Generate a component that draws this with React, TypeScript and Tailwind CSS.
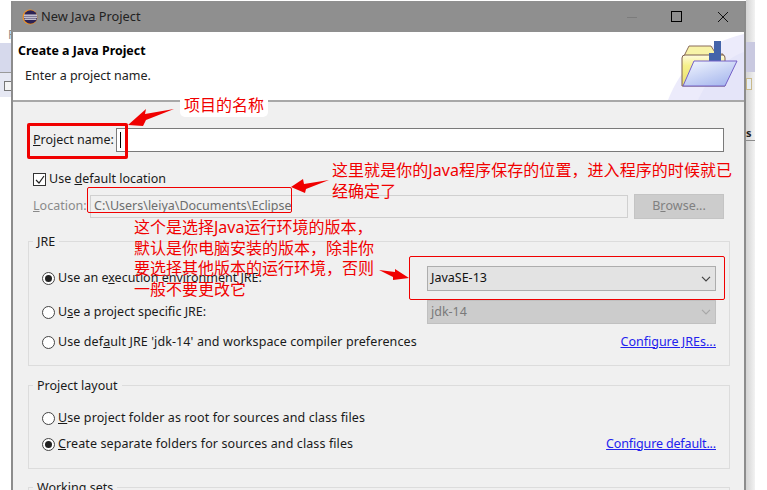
const font = "[font-family:'Noto_Sans','Noto_Sans_CJK_SC',sans-serif]";

function EclipseIcon() {
  return (
    <svg width="16" height="16" viewBox="0 0 16 16">
      <circle cx="8" cy="8" r="7.5" fill="#f7941e" />
      <circle cx="8.5" cy="8" r="6.8" fill="#2c2255" />
      <rect x="2" y="5.6" width="13" height="1.1" fill="#fff" />
      <rect x="1.8" y="7.6" width="13.4" height="1.1" fill="#fff" />
      <rect x="2.4" y="9.6" width="12" height="1.1" fill="#fff" />
    </svg>
  );
}

function FolderBanner() {
  return (
    <svg width="76" height="66" viewBox="0 0 76 66">
      <defs>
        <linearGradient id="flap" x1="0" y1="0" x2="0.7" y2="1">
          <stop offset="0" stopColor="#f4f8ff" />
          <stop offset="1" stopColor="#a9b9ee" />
        </linearGradient>
        <linearGradient id="back" x1="0" y1="0" x2="0" y2="1">
          <stop offset="0" stopColor="#fffbe0" />
          <stop offset="0.35" stopColor="#f6f08a" />
          <stop offset="1" stopColor="#e8e070" />
        </linearGradient>
      </defs>
      <path d="M0 66C14 30 40 8 76 0V66Z" fill="#ecebfb" />
      <path d="M30 66C42 40 58 24 76 18V66Z" fill="#e5e5f9" />
      <g transform="translate(3 -4)">
        <path d="M12 28L18 16H40L45 24H52V28Z" fill="#f8f3a8" stroke="#8a6d5a" />
        <path d="M11 28Q11 25 14 25H52Q54 25 54 28V56H11Z" fill="url(#back)" stroke="#7d5f50" />
        <path d="M43 11H50V32H38V23H43Z" fill="#4464aa" />
        <path d="M23 31H66L54 56H12Z" fill="url(#flap)" stroke="#7560c8" />
      </g>
    </svg>
  );
}

function Radio({ checked }: { checked?: boolean }) {
  return (
    <span className="flex h-[13px] w-[13px] shrink-0 items-center justify-center rounded-full border border-[#444] bg-white">
      {checked && <span className="h-[7px] w-[7px] rounded-full bg-[#222]" />}
    </span>
  );
}

function Chevron({ color }: { color: string }) {
  return (
    <svg width="10" height="6" viewBox="0 0 10 6" fill="none" stroke={color} strokeWidth="1.2">
      <path d="M1 .8l4 4 4-4" />
    </svg>
  );
}

function Select({ label, disabled }: { label: string; disabled?: boolean }) {
  return (
    <div
      className={
        disabled
          ? "flex h-[24px] w-[289px] items-center justify-between border border-[#c0c0c0] bg-[#cccccc] pl-[3px] pr-[4px] text-[#7a7a7a]"
          : "flex h-[25px] w-[289px] items-center justify-between border border-[#adadad] bg-[#e3e3e3] pl-[3px] pr-[4px] text-[#111]"
      }
    >
      <span>{label}</span>
      <Chevron color={disabled ? "#a8a8a8" : "#444"} />
    </div>
  );
}

function GroupLabel({ text }: { text: string }) {
  return <span className="absolute left-[4px] top-[-9px] bg-[#f0f0f0] px-[4px] leading-[18px] text-[#1a1a1a]">{text}</span>;
}

function RadioRow({ checked, children, link }: { checked?: boolean; children: React.ReactNode; link?: React.ReactNode }) {
  return (
    <div className="flex h-[18px] items-center gap-[3px] pl-[13px] pr-[13px]">
      <Radio checked={checked} />
      <span className="flex-1 tracking-[0.1px] text-[#1a1a1a]">{children}</span>
      {link}
    </div>
  );
}

function Annotation({ className, children }: { className: string; children: React.ReactNode }) {
  return <div className={`absolute whitespace-nowrap text-[16px] leading-[20.5px] text-[#f00000] ${className}`}>{children}</div>;
}

export default function App() {
  return (
    <div className={`relative flex h-[490px] w-[767px] overflow-hidden bg-white text-[12.5px] ${font}`}>
      {/* what is left of the main window behind the dialog */}
      <div className="w-[11px] shrink-0 overflow-hidden pt-[26px]">
        <div className="h-[17px] pl-[8px] leading-[17px] text-[#8a8a8a]">P</div>
        <div className="h-[29px] bg-[#d6d9ec]" />
        <div className="h-[25px] border-t border-[#9a9a9a] bg-[#e6e8f3] pl-[4px] pt-[8px]">
          <div className="h-[10px] border border-r-0 border-[#777] bg-[#f4f4f4]" />
        </div>
      </div>

      <div className="flex h-[489px] w-[735px] shrink-0 flex-col self-end border-x-2 border-[#8c8c8c] bg-[#f0f0f0]">
        <div className="flex h-[31px] shrink-0 items-center bg-[#8f8f8f] pl-[9px] text-[#222]">
          <EclipseIcon />
          <span className="ml-[3px] flex-1 pt-[1px] text-[12.8px]">New Java Project</span>
          <svg width="12" height="12" viewBox="0 0 12 12" className="mr-[33px]" fill="none">
            <path d="M1 6.5h10" stroke="#7c7c7c" />
          </svg>
          <svg width="12" height="12" viewBox="0 0 12 12" className="mr-[34px]" fill="none">
            <rect x=".5" y=".5" width="10" height="10" stroke="#000" />
          </svg>
          <svg width="12" height="12" viewBox="0 0 12 12" className="mr-[15px]" fill="none">
            <path d="M1 1l10 10M11 1L1 11" stroke="#111" />
          </svg>
        </div>

        <div className="flex h-[70px] shrink-0 justify-between border-b-2 border-[#a8a8a8] bg-white">
          <div className="pl-[5px] pt-[10px]">
            <div className="text-[12.4px] font-bold leading-[18px] text-black">Create a Java Project</div>
            <div className="mt-[7px] pl-[7px] leading-[18px] text-[#222]">Enter a project name.</div>
          </div>
          <div className="self-end">
            <FolderBanner />
          </div>
        </div>

        <div className="flex flex-col pl-[20px] pr-[20px] pt-[26px]">
          <div className="flex h-[24px] items-center">
            <span className="w-[83px] text-[#1a1a1a]">
              <span className="underline">P</span>roject name:
            </span>
            <div className="flex h-[24px] flex-1 items-center border border-[#7a7a7a] bg-white pl-[3px]">
              <span className="h-[16px] w-px bg-black" />
            </div>
          </div>

          <div className="mt-[20px] flex h-[15px] items-center gap-[3px]">
            <span className="flex h-[13px] w-[13px] items-center justify-center border border-[#333] bg-white">
              <svg width="10" height="10" viewBox="0 0 10 10" fill="none" stroke="#222" strokeWidth="1.2">
                <path d="M1 5l3 3 5-7" />
              </svg>
            </span>
            <span className="text-[#1a1a1a]">
              Use <span className="underline">d</span>efault location
            </span>
          </div>

          <div className="mt-[7px] flex h-[25px] items-center">
            <span className="w-[57px] text-[#8a8a8a]">
              <span className="underline">L</span>ocation:
            </span>
            <div className="flex h-[23px] w-[538px] items-center border border-[#d0d0d0] bg-[#f0f0f0] pl-[3px] text-[#6d6d6d]">
              C:\Users\leiya\Documents\Eclipse
            </div>
            <div className="ml-[6px] flex h-[25px] w-[90px] items-center justify-center border border-[#c4c4c4] bg-[#cccccc] text-[#808080]">
              B<span className="underline">r</span>owse...
            </div>
          </div>

          <div className="relative ml-[-5px] mr-[-6px] mt-[22px] h-[125px] border border-[#dcdcdc]">
            <GroupLabel text="JRE" />
            <div className="mt-[24px] flex h-[25px] items-center gap-[3px] pl-[13px] pr-[13px]">
              <Radio checked />
              <span className="flex-1 text-[#1a1a1a]">
                Use an e<span className="underline">x</span>ecution environment JRE:
              </span>
              <Select label="JavaSE-13" />
            </div>
            <div className="mt-[9px] flex h-[24px] items-center gap-[3px] pl-[13px] pr-[13px]">
              <Radio />
              <span className="flex-1 text-[#1a1a1a]">
                U<span className="underline">s</span>e a project specific JRE:
              </span>
              <Select label="jdk-14" disabled />
            </div>
            <div className="mt-[9px]">
              <RadioRow link={<span className="text-[#2222ee] underline">Configure JREs...</span>}>
                Use def<span className="underline">a</span>ult JRE 'jdk-14' and workspace compiler preferences
              </RadioRow>
            </div>
          </div>

          <div className="relative ml-[-5px] mr-[-6px] mt-[19px] h-[84px] border border-[#dcdcdc]">
            <GroupLabel text="Project layout" />
            <div className="mt-[23px]">
              <RadioRow>
                <span className="underline">U</span>se project folder as root for sources and class files
              </RadioRow>
            </div>
            <div className="mt-[8px]">
              <RadioRow checked link={<span className="tracking-[-0.15px] text-[#2222ee] underline">Configure default...</span>}>
                <span className="underline">C</span>reate separate folders for sources and class files
              </RadioRow>
            </div>
          </div>

          <div className="relative ml-[-5px] mr-[-6px] mt-[18px] h-[30px] border border-[#dcdcdc]">
            <GroupLabel text="Working sets" />
          </div>
        </div>
      </div>

      <div className="w-[9px] shrink-0 bg-gradient-to-r from-[#d4d4d4] to-[#f2f2f2] pt-[42px]">
        <div className="h-[30px] bg-[#c9c9e0]" />
        <div className="mt-[6px] h-[12px] w-[6px] border border-[#c9b98a] bg-[#e6edf5]" />
        <div className="mt-[36px] text-[11px] font-bold leading-[14px] text-[#222]">s</div>
        <div className="h-px bg-[#8c8c8c]" />
      </div>

      {/* red notes drawn on top of the dialog */}
      <div className="absolute left-[27px] top-[123px] h-[36px] w-[101px] rounded-[2px] border-[3px] border-[#f00000]" />
      <div className="absolute left-[87px] top-[187px] h-[26px] w-[205px] rounded-[2px] border border-[#f00000]" />
      <div className="absolute left-[409px] top-[256px] h-[44px] w-[316px] rounded-[2px] border border-[#f00000]" />

      <svg className="absolute left-[126px] top-[106px]" width="52" height="22" viewBox="0 0 52 22">
        <path d="M2 19L20 3L19 8L48 3L20 14L17 20Z" fill="#f00000" />
      </svg>
      <svg className="absolute left-[289px] top-[176px]" width="42" height="20" viewBox="0 0 42 20">
        <path d="M2 11L14 3L15 8L40 4L17 13L16 17Z" fill="#f00000" />
      </svg>
      <svg className="absolute left-[378px] top-[266px]" width="32" height="18" viewBox="0 0 32 18">
        <path d="M1 4L17 6L17 3L31 12L15 14L15 11Z" fill="#f00000" />
      </svg>

      <Annotation className="left-[180px] top-[95px] h-[22px] rounded-[5px] bg-white px-[4px]">项目的名称</Annotation>
      <Annotation className="left-[332px] top-[160px] tracking-[0.06px]">
        这里就是你的Java程序保存的位置，进入程序的时候就已
        <br />
        经确定了
      </Annotation>
      <Annotation className="left-[134px] top-[217px]">
        这个是选择Java运行环境的版本，
        <br />
        默认是你电脑安装的版本，除非你
        <br />
        要选择其他版本的运行环境，否则
        <br />
        一般不要更改它
      </Annotation>
    </div>
  );
}
